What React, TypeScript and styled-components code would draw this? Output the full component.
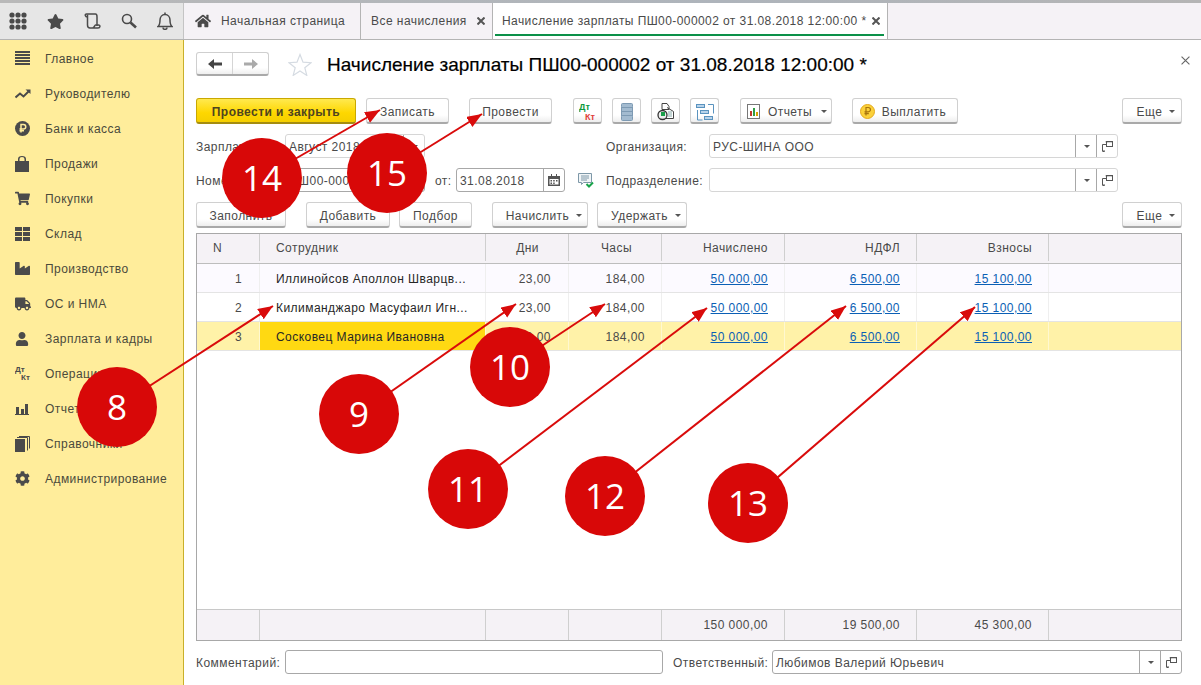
import React from "react";
import styled, { createGlobalStyle } from "styled-components";
import { FaCog, FaHome, FaIndustry, FaShoppingCart, FaStar, FaTruck, FaUser } from "react-icons/fa";

const Global = createGlobalStyle`
  html, body { margin: 0; padding: 0; background: #fff; }
  body { font-family: "Liberation Sans", Arial, sans-serif; font-size: 12px; color: #4a4a4a; letter-spacing: 0.45px; }
`;

const Page = styled.div`
  position: relative;
  width: 1201px;
  height: 685px;
  overflow: hidden;
  display: flex;
  flex-direction: column;
`;
const TopStrip = styled.div`
  height: 3px;
  background: linear-gradient(90deg, #b9b9b9, #aeb4bb 60%, #b5b5b5);
`;
const TopBar = styled.div`
  height: 36px;
  display: flex;
  border-bottom: 1px solid #b4b4b4;
  background: #f5f2f6;
`;
const QuickBar = styled.div`
  width: 184px;
  background: #e6e6e6;
  border-right: 1px solid #c4c4c4;
  display: flex;
  align-items: center;
  justify-content: space-between;
  padding: 0 10px 0 9px;
  box-sizing: border-box;
  svg { display: block; }
`;
const Tab = styled.div<{ $w: number; $active?: boolean }>`
  width: ${(p) => p.$w}px;
  box-sizing: border-box;
  display: flex;
  align-items: center;
  position: relative;
  padding-left: ${(p) => (p.$active ? 9 : 10)}px;
  border-right: 1px solid #b4b4b4;
  background: ${(p) => (p.$active ? "#fff" : "#f5f2f6")};
  color: #4a4a4a;
  ${(p) => p.$active && "letter-spacing: 0.42px; &::after { content: ''; position: absolute; left: 2px; right: 3px; bottom: 3px; height: 2px; background: #0c9149; }"}
`;
const TabClose = styled.span`
  margin-left: auto;
  margin-right: 7px;
  display: flex;
`;
const HomeMark = styled.span`
  display: flex;
  margin: 0 10px 0 1px;
`;
const Body = styled.div`
  flex: 1;
  display: flex;
  min-height: 0;
`;
const Sidebar = styled.nav`
  width: 184px;
  box-sizing: border-box;
  background: #ffed9b;
  border-right: 1px solid #c9b02a;
  padding-top: 1px;
`;
const NavItem = styled.div`
  height: 35px;
  display: flex;
  align-items: center;
  color: #4b4a3c;
`;
const NavIcon = styled.span`
  width: 45px;
  display: flex;
  padding-left: 15px;
  box-sizing: border-box;
  color: #4b4b4b;
`;
const Main = styled.main`
  flex: 1;
  min-width: 0;
  padding: 12px 19px 0 12px;
  display: flex;
  flex-direction: column;
`;
const Header = styled.div`
  height: 24px;
  display: flex;
  align-items: center;
  position: relative;
`;
const NavGroup = styled.div`
  width: 73px;
  height: 24px;
  box-sizing: border-box;
  display: flex;
  border: 1px solid #cfcfcf;
  border-bottom: 2px solid #a9a9a9;
  border-radius: 3px;
  background: linear-gradient(#fff 70%, #efefef);
`;
const NavPart = styled.div<{ $line?: boolean }>`
  flex: 1;
  display: flex;
  align-items: center;
  justify-content: center;
  ${(p) => p.$line && "border-right: 1px solid #d5d5d5;"}
`;
const FavStar = styled.span`
  margin-left: 19px;
  display: flex;
`;
const Title = styled.h1`
  margin: 2px 0 0 15px;
  font-size: 19px;
  font-weight: normal;
  color: #000;
  letter-spacing: 0;
  -webkit-text-stroke: 0.2px #000;
  white-space: nowrap;
`;
const CloseForm = styled.span`
  position: absolute;
  right: -8px;
  top: 4px;
  display: flex;
`;
const Toolbar = styled.div<{ $top: number }>`
  height: 26px;
  margin-top: ${(p) => p.$top}px;
  display: flex;
`;
const Button = styled.div<{ $w: number; $gap?: number; $right?: boolean; $primary?: boolean; $shift?: number; $space?: number }>`
  width: ${(p) => p.$w}px;
  height: 26px;
  box-sizing: border-box;
  margin-left: ${(p) => (p.$right ? "auto" : `${p.$gap ?? 0}px`)};
  padding: 2px 0 0 ${(p) => Math.max(p.$shift ?? 0, 0)}px;
  ${(p) => (p.$shift ?? 0) < 0 && `padding-right: ${-(p.$shift ?? 0)}px;`}
  display: flex;
  align-items: center;
  justify-content: center;
  gap: ${(p) => p.$space ?? 7}px;
  border-radius: 3px;
  border: 1px solid ${(p) => (p.$primary ? "#c9a800" : "#d0d0d0")};
  border-bottom: 2px solid ${(p) => (p.$primary ? "#a58d10" : "#a9a9a9")};
  background: ${(p) => (p.$primary ? "linear-gradient(#ffe94f, #fed700 60%, #f5cf00)" : "linear-gradient(#fff 70%, #eeeeee)")};
  color: ${(p) => (p.$primary ? "#4d4420" : "#4a4a4a")};
  font-weight: ${(p) => (p.$primary ? "bold" : "normal")};
  white-space: nowrap;
`;
const Caret = styled.i`
  width: 0;
  height: 0;
  border: 3px solid transparent;
  border-top: 3px solid #555;
  border-bottom: 0;
  margin-left: 1px;
`;
const FormGrid = styled.div`
  margin-top: 10px;
  display: grid;
  grid-template-columns: 89px 140px 181px 103px 409px;
  grid-auto-rows: 24px;
  row-gap: 10px;
  align-items: center;
`;
const Label = styled.span`
  white-space: nowrap;
  padding-top: 1px;
`;
const Field = styled.div<{ $w?: number; $dark?: boolean }>`
  ${(p) => (p.$w ? `width: ${p.$w}px;` : "")}
  height: 24px;
  box-sizing: border-box;
  display: flex;
  align-items: stretch;
  border: 1px solid ${(p) => (p.$dark ? "#a8a8a8" : "#d6d6d6")};
  border-radius: 3px;
  background: #fff;
  overflow: hidden;
`;
const FieldText = styled.div`
  flex: 1;
  min-width: 0;
  padding: 2px 0 0 3px;
  display: flex;
  align-items: center;
  white-space: nowrap;
`;
const FieldBtn = styled.div`
  width: 20px;
  display: flex;
  align-items: center;
  justify-content: center;
  border-left: 1px solid #a8a8a8;
`;
const DateCell = styled.div`
  display: flex;
  align-items: center;
  padding-left: 10px;
`;
const DateLabel = styled.span`
  width: 21px;
  padding-top: 1px;
`;
const DocIcon = styled.span`
  display: flex;
  margin-left: 13px;
`;
const Table = styled.div`
  margin-top: 5px;
  height: 408px;
  box-sizing: border-box;
  display: flex;
  flex-direction: column;
  border: 1px solid #a8a8a8;
`;
const columns = "63px 226px 83px 93px 123px 132px 132px 1fr";
const HeadRow = styled.div`
  display: grid;
  grid-template-columns: ${columns};
  height: 30px;
  box-sizing: border-box;
  padding-bottom: 2px;
  border-bottom: 1px solid #bdbdbd;
  background: #f5f2f6;
`;
const FootRow = styled.div`
  display: grid;
  grid-template-columns: ${columns};
  margin-top: auto;
  height: 31px;
  box-sizing: border-box;
  border-top: 1px solid #c8c8c8;
  background: #f5f2f6;
`;
const DataRow = styled.div<{ $bg: string }>`
  display: grid;
  grid-template-columns: ${columns};
  height: 29px;
  box-sizing: border-box;
  border-bottom: 1px solid #e4e4e4;
  background: ${(p) => p.$bg};
`;
const Cell = styled.div<{ $right?: number; $left?: number; $line?: string; $bg?: string; $dark?: boolean; $low?: boolean }>`
  display: flex;
  align-items: center;
  box-sizing: border-box;
  overflow: hidden;
  white-space: nowrap;
  justify-content: ${(p) => (p.$right !== undefined ? "flex-end" : "flex-start")};
  padding-right: ${(p) => p.$right ?? 0}px;
  padding-left: ${(p) => p.$left ?? 0}px;
  padding-top: ${(p) => (p.$low ? 2 : 0)}px;
  border-right: 1px solid ${(p) => p.$line ?? "#cfcfcf"};
  ${(p) => p.$bg && `background: ${p.$bg};`}
  ${(p) => p.$dark && "color: #262626;"}
`;
const Link = styled.a`
  color: #0b5fb5;
  text-decoration: underline;
`;
const BottomRow = styled.div`
  margin-top: 9px;
  display: flex;
  align-items: center;
`;
const CommentLabel = styled.span`
  width: 89px;
  padding-top: 1px;
`;
const RespLabel = styled.span`
  width: 99px;
  margin-left: 10px;
  padding-top: 1px;
`;
const Overlay = styled.svg`
  position: absolute;
  left: 0;
  top: 0;
  pointer-events: none;
`;
const BadgeText = styled.text`
  font-family: "Open Sans", sans-serif;
  font-size: 35px;
  letter-spacing: 0;
  fill: #fff;
`;

const X = ({ size = 8, w = 2, c = "#555" }: { size?: number; w?: number; c?: string }) => (
  <svg width={size} height={size} viewBox="0 0 8 8">
    <path d="M.5.5l7 7M7.5.5l-7 7" stroke={c} strokeWidth={w} />
  </svg>
);

const OpenIcon = () => (
  <svg width="11" height="11" viewBox="0 0 11 11" fill="none" stroke="#555">
    <rect x="4.500" y=".5" width="6" height="5" />
    <path d="M4.500 1.500h0M4.500 3.500H.5v6.500h2.500M.5 10.500h2" />
    <path d="M4.500 1.500v-1h6v1" strokeWidth="1.500" />
  </svg>
);

const Apps = () => (
  <svg width="18" height="18" viewBox="0 0 18 18" fill="#4a4a4a">
    {[3, 9, 15].flatMap((y) => [3, 9, 15].map((x) => <circle key={`${x}-${y}`} cx={x} cy={y} r="2.600" />))}
  </svg>
);
const Scroll = () => (
  <svg width="17" height="16" viewBox="0 0 17 16" fill="none" stroke="#4a4a4a" strokeWidth="1.500">
    <path d="M3.500 4C1 4 .5 1 2.500 1H11.500c1.500 0 1.500 1.500 1.500 3v9" />
    <path d="M3.500 1.500V12c0 2 1 3 2.500 3h8c2.500 0 2.500-3 .5-3h-3c-1 0-1 3-3 3" />
  </svg>
);
const Search = () => (
  <svg width="16" height="16" viewBox="0 0 16 16" fill="none" stroke="#4a4a4a">
    <circle cx="6" cy="6" r="4.500" strokeWidth="1.600" />
    <path d="M9.500 9.500l5.500 5" strokeWidth="2.600" />
  </svg>
);
const Bell = () => (
  <svg width="16" height="18" viewBox="0 0 16 18" fill="none" stroke="#4a4a4a" strokeWidth="1.500">
    <path d="M1 14.500c2-1.500 2-3.500 2-6.500 0-3 2-5.500 5-5.500s5 2.500 5 5.500c0 3 0 5 2 6.500z" />
    <path d="M8 .5v2M6 15.500c0 2.500 4 2.500 4 0" />
  </svg>
);

const Lines = () => (
  <svg width="16" height="15" viewBox="0 0 16 15" fill="#4a4a4a">
    {[0, 3, 6, 9, 12].map((y) => <rect key={y} y={y} width="15" height="2" />)}
  </svg>
);
const Trend = () => (
  <svg width="16" height="12" viewBox="0 0 16 12" fill="none">
    <path d="M.5 9.500l4.500-4 3.500 3 5-5" stroke="#4a4a4a" strokeWidth="2" />
    <path d="M10.500 1.500h5v4.500z" fill="#4a4a4a" />
  </svg>
);
const Ruble = () => (
  <svg width="15" height="15" viewBox="0 0 15 15">
    <circle cx="7.500" cy="7.500" r="7.500" fill="#4a4a4a" />
    <path d="M6 11.500v-8h2.500a2 2 0 0 1 0 4.500H4.500M4.500 9.800h4.500" fill="none" stroke="#ffed9b" strokeWidth="1.500" />
  </svg>
);
const Bag = () => (
  <svg width="14" height="16" viewBox="0 0 14 16" fill="#4a4a4a">
    <path d="M0 5h3V3a4 3 0 0 1 8 0v2h3v11H0zM4.500 5h5V3a2.500 2 0 0 0-5 0z" fillRule="evenodd" />
  </svg>
);
const Blocks = () => (
  <svg width="15" height="14" viewBox="0 0 15 14" fill="#4a4a4a">
    {[0, 5, 10].flatMap((y) => [0, 8].map((x) => <rect key={`${x}-${y}`} x={x} y={y} width="7" height="4" />))}
  </svg>
);
const DtKt = ({ green }: { green?: boolean }) => (
  <svg width="18" height="18" viewBox="0 0 18 18" fontFamily="Liberation Sans, sans-serif" fontWeight="bold" fontSize={green ? 9 : 8} letterSpacing="0">
    <text x="0" y="7" fill={green ? "#0b9a3c" : "#4a4a4a"}>Дт</text>
    <text x="6" y={green ? 17 : 15} fill={green ? "#e0403a" : "#4a4a4a"}>Кт</text>
  </svg>
);
const Bars = () => (
  <svg width="14" height="12" viewBox="0 0 14 12" fill="#4a4a4a">
    <path d="M1 4h3v7H1zM6 6h3v5H6zM10 1h3v10h-3zM0 11h14v1H0z" />
  </svg>
);
const Pages = () => (
  <svg width="15" height="16" viewBox="0 0 15 16">
    <rect y="3" width="10" height="13" fill="#4a4a4a" />
    <path d="M2 1.500h10.500v13M4 .5h10.500v12" fill="none" stroke="#4a4a4a" />
  </svg>
);

const Db = () => (
  <svg width="12" height="18" viewBox="0 0 12 18" fill="#a3bbd0" stroke="#7d9ab3">
    <rect x=".5" y=".5" width="11" height="4" rx="1" />
    <rect x=".5" y="4.500" width="11" height="4" />
    <rect x=".5" y="8.500" width="11" height="4" />
    <rect x=".5" y="12.500" width="11" height="5" rx="1" />
  </svg>
);
const DocClock = () => (
  <svg width="18" height="18" viewBox="0 0 18 18" fill="none">
    <path d="M5 .5h5l2 3v3H5z M10 4.500l6.500 4v7H8" fill="#fff" stroke="#444" />
    <path d="M11 9h4M11 11h4M11 13h4" stroke="#8aa" />
    <circle cx="5.500" cy="12" r="4.500" fill="#eee" stroke="#333" strokeWidth="1.300" />
    <rect x="4" y="9" width="4" height="4" fill="#1aa04a" />
  </svg>
);
const Struct = () => (
  <svg width="18" height="18" viewBox="0 0 18 18" fill="#b8d3ea" stroke="#5a93bf">
    <rect x=".5" y="1.500" width="8" height="3" />
    <rect x="4.500" y="7.500" width="8" height="3" />
    <rect x="8.500" y="13.500" width="8" height="3" />
    <path d="M12 1.500h5.500v9M1.500 7v10h5" fill="none" />
  </svg>
);
const Report = () => (
  <svg width="13" height="15" viewBox="0 0 13 15">
    <rect x=".5" y=".5" width="12" height="14" fill="#fff" stroke="#777" />
    <rect x="3" y="7" width="2" height="5" fill="#c0392b" />
    <rect x="6" y="4" width="2" height="8" fill="#2f9e44" />
    <rect x="9" y="8" width="2" height="4" fill="#d9a400" />
  </svg>
);
const Coin = () => (
  <svg width="15" height="15" viewBox="0 0 15 15">
    <circle cx="7.500" cy="7.500" r="7" fill="#fbd13a" stroke="#e4a91c" />
    <path d="M6 11.500v-8h2.300a2 2 0 0 1 0 4.300H4.500M4.500 9.600h4.300" fill="none" stroke="#a8740e" strokeWidth="1.200" />
  </svg>
);
const Calendar = () => (
  <svg width="12" height="12" viewBox="0 0 12 12" fill="#555">
    <path d="M0 2h12v10H0zM1.500 5v5.500h9V5z" fillRule="evenodd" />
    <path d="M2.500 6h1.500v1.500H2.500zM5.200 6h1.500v1.500H5.200zM8 6h1.500v1.500H8zM2.500 8.500h1.500V10H2.500zM5.200 8.500h1.500V10H5.200zM3 0h1v2H3zM8 0h1v2H8z" />
  </svg>
);
const DocCheck = () => (
  <svg width="16" height="15" viewBox="0 0 16 15">
    <path d="M.5.500h13v9h-8l-2 2v-2h-3z" fill="#f1f5f7" stroke="#7e98a8" />
    <path d="M3 3h8M3 5h8M3 7h6" stroke="#7e98a8" />
    <path d="M8.500 11l2.500 2.500 4-4" fill="none" stroke="#19a34a" strokeWidth="2" />
  </svg>
);
const ArrowLeft = ({ c }: { c: string }) => (
  <svg width="14" height="10" viewBox="0 0 14 10" fill={c}><path d="M0 5l6-5v3.500h8v3H6V10z" /></svg>
);
const ArrowRight = ({ c }: { c: string }) => (
  <svg width="14" height="10" viewBox="0 0 14 10" fill={c}><path d="M14 5L8 0v3.500H0v3h8V10z" /></svg>
);
const StarOutline = () => (
  <svg width="24" height="23" viewBox="0 0 24 23" fill="none" stroke="#d5dbe2" strokeWidth="1.200">
    <path d="M12 1.500l3 7.700 8 .5-6.200 5 2 7.700L12 18l-6.800 4.400 2-7.700L1 9.700l8-.5z" />
  </svg>
);

const nav: [string, React.ReactNode][] = [
  ["Главное", <Lines />],
  ["Руководителю", <Trend />],
  ["Банк и касса", <Ruble />],
  ["Продажи", <Bag />],
  ["Покупки", <FaShoppingCart size={15} />],
  ["Склад", <Blocks />],
  ["Производство", <FaIndustry size={15} />],
  ["ОС и НМА", <FaTruck size={16} />],
  ["Зарплата и кадры", <FaUser size={14} />],
  ["Операции", <DtKt />],
  ["Отчеты", <Bars />],
  ["Справочники", <Pages />],
  ["Администрирование", <FaCog size={15} />],
];

const rows = [
  { n: "1", name: "Иллинойсов Аполлон Шварцв...", bg: "#fcfaff" },
  { n: "2", name: "Килиманджаро Масуфаил Игн...", bg: "#fff" },
  { n: "3", name: "Сосковец Марина Ивановна", bg: "#fff2a8", active: true },
];

const badges = [
  { t: "14", x: 262, y: 178, tx: 380, ty: 110 },
  { t: "15", x: 387, y: 173, tx: 482, ty: 114 },
  { t: "8", x: 117, y: 407, tx: 273, ty: 306 },
  { t: "9", x: 359, y: 414, tx: 516, ty: 304 },
  { t: "10", x: 510, y: 367, tx: 605, ty: 304 },
  { t: "11", x: 468, y: 489, tx: 707, ty: 308 },
  { t: "12", x: 605, y: 496, tx: 846, ty: 306 },
  { t: "13", x: 748, y: 503, tx: 975, ty: 307 },
];

export default function App() {
  return (
    <Page>
      <Global />
      <TopStrip />
      <TopBar>
        <QuickBar>
          <Apps />
          <FaStar size={17} color="#4a4a4a" />
          <Scroll />
          <Search />
          <Bell />
        </QuickBar>
        <Tab $w={177}>
          <HomeMark><FaHome size={16} color="#4a4a4a" /></HomeMark>
          Начальная страница
        </Tab>
        <Tab $w={132}>
          Все начисления
          <TabClose><X /></TabClose>
        </Tab>
        <Tab $w={395} $active>
          Начисление зарплаты ПШ00-000002 от 31.08.2018 12:00:00 *
          <TabClose><X /></TabClose>
        </Tab>
      </TopBar>
      <Body>
        <Sidebar>
          {nav.map(([label, icon]) => (
            <NavItem key={label}>
              <NavIcon>{icon}</NavIcon>
              {label}
            </NavItem>
          ))}
        </Sidebar>
        <Main>
          <Header>
            <NavGroup>
              <NavPart $line><ArrowLeft c="#444" /></NavPart>
              <NavPart><ArrowRight c="#aaa" /></NavPart>
            </NavGroup>
            <FavStar><StarOutline /></FavStar>
            <Title>Начисление зарплаты ПШ00-000002 от 31.08.2018 12:00:00 *</Title>
            <CloseForm><X size={9} w={1} c="#666" /></CloseForm>
          </Header>
          <Toolbar $top={22}>
            <Button $w={160} $primary>Провести и закрыть</Button>
            <Button $w={83} $gap={10}>Записать</Button>
            <Button $w={83} $gap={20}>Провести</Button>
            <Button $w={29} $gap={21}><DtKt green /></Button>
            <Button $w={29} $gap={10}><Db /></Button>
            <Button $w={29} $gap={10}><DocClock /></Button>
            <Button $w={29} $gap={10}><Struct /></Button>
            <Button $w={92} $gap={21} $shift={2} $space={8}><Report />Отчеты<Caret /></Button>
            <Button $w={106} $gap={20} $shift={-4}><Coin />Выплатить</Button>
            <Button $w={60} $right $shift={8} $space={6}>Еще<Caret /></Button>
          </Toolbar>
          <FormGrid>
            <Label>Зарплата за:</Label>
            <Field>
              <FieldText>Август 2018</FieldText>
              <FieldBtn><Caret /></FieldBtn>
            </Field>
            <span />
            <Label>Организация:</Label>
            <Field>
              <FieldText>РУС-ШИНА ООО</FieldText>
              <FieldBtn><Caret /></FieldBtn>
              <FieldBtn><OpenIcon /></FieldBtn>
            </Field>
            <Label>Номер:</Label>
            <Field $dark>
              <FieldText>ПШ00-000002</FieldText>
            </Field>
            <DateCell>
              <DateLabel>от:</DateLabel>
              <Field $w={109} $dark>
                <FieldText>31.08.2018</FieldText>
                <FieldBtn><Calendar /></FieldBtn>
              </Field>
              <DocIcon><DocCheck /></DocIcon>
            </DateCell>
            <Label>Подразделение:</Label>
            <Field>
              <FieldText />
              <FieldBtn><Caret /></FieldBtn>
              <FieldBtn><OpenIcon /></FieldBtn>
            </Field>
          </FormGrid>
          <Toolbar $top={10}>
            <Button $w={90}>Заполнить</Button>
            <Button $w={84} $gap={20}>Добавить</Button>
            <Button $w={73} $gap={9}>Подбор</Button>
            <Button $w={96} $gap={20} $shift={8} $space={6}>Начислить<Caret /></Button>
            <Button $w={90} $gap={9} $shift={8} $space={6}>Удержать<Caret /></Button>
            <Button $w={60} $right $shift={8} $space={6}>Еще<Caret /></Button>
          </Toolbar>
          <Table>
            <HeadRow>
              <Cell $left={16}>N</Cell>
              <Cell $left={16}>Сотрудник</Cell>
              <Cell $right={29}>Дни</Cell>
              <Cell $right={29}>Часы</Cell>
              <Cell $right={16}>Начислено</Cell>
              <Cell $right={16}>НДФЛ</Cell>
              <Cell $right={16}>Взносы</Cell>
              <Cell $line="transparent" />
            </HeadRow>
            {rows.map((r) => {
              const line = r.active ? "#fff8d0" : "#efefef";
              return (
                <DataRow key={r.n} $bg={r.bg}>
                  <Cell $low $right={17} $line={line}>{r.n}</Cell>
                  <Cell $low $left={16} $line={line} $bg={r.active ? "#ffd912" : undefined} $dark>{r.name}</Cell>
                  <Cell $low $right={17} $line={line}>23,00</Cell>
                  <Cell $low $right={16} $line={line}>184,00</Cell>
                  <Cell $low $right={16} $line={line}><Link>50 000,00</Link></Cell>
                  <Cell $low $right={16} $line={line}><Link>6 500,00</Link></Cell>
                  <Cell $low $right={16} $line={line}><Link>15 100,00</Link></Cell>
                  <Cell $line="transparent" />
                </DataRow>
              );
            })}
            <FootRow>
              <Cell />
              <Cell />
              <Cell />
              <Cell />
              <Cell $right={16}>150 000,00</Cell>
              <Cell $right={16}>19 500,00</Cell>
              <Cell $right={16}>45 300,00</Cell>
              <Cell $line="transparent" />
            </FootRow>
          </Table>
          <BottomRow>
            <CommentLabel>Комментарий:</CommentLabel>
            <Field $w={378} $dark><FieldText /></Field>
            <RespLabel>Ответственный:</RespLabel>
            <Field $w={410} $dark>
              <FieldText>Любимов Валерий Юрьевич</FieldText>
              <FieldBtn><Caret /></FieldBtn>
              <FieldBtn><OpenIcon /></FieldBtn>
            </Field>
          </BottomRow>
        </Main>
      </Body>
      <Overlay width="1201" height="685" viewBox="0 0 1201 685">
        <defs>
          <marker id="head" markerUnits="userSpaceOnUse" markerWidth="16" markerHeight="14" refX="15" refY="6" orient="auto">
            <path d="M0 0L15 6L0 12z" fill="#d90b0b" />
          </marker>
        </defs>
        {badges.map((b) => (
          <g key={b.t}>
            <line x1={b.x} y1={b.y} x2={b.tx} y2={b.ty} stroke="#d90b0b" strokeWidth="2" markerEnd="url(#head)" />
            <circle cx={b.x} cy={b.y} r="40" fill="#d80808" />
            <BadgeText x={b.x} y={b.y + 13} textAnchor="middle">{b.t}</BadgeText>
          </g>
        ))}
      </Overlay>
    </Page>
  );
}
